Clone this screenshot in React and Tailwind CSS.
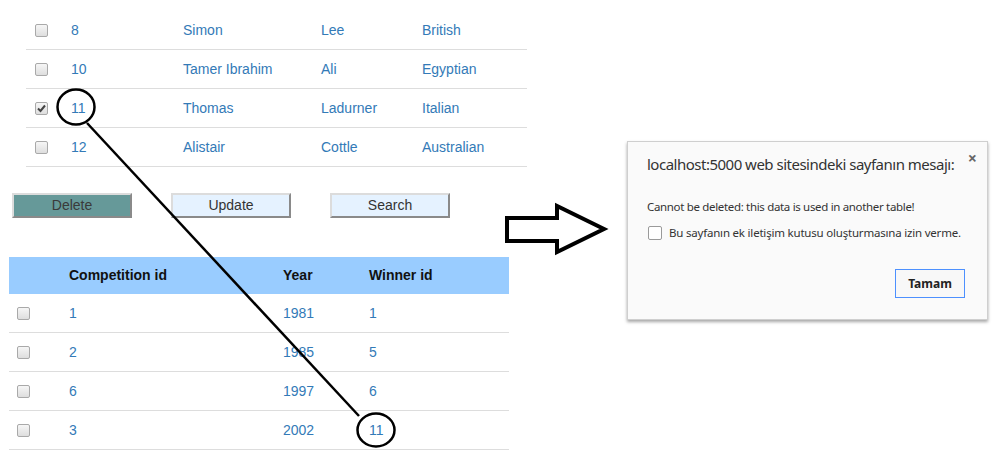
import React from 'react';

const people = [
  { id: 8, first: 'Simon', last: 'Lee', nat: 'British' },
  { id: 10, first: 'Tamer Ibrahim', last: 'Ali', nat: 'Egyptian' },
  { id: 11, first: 'Thomas', last: 'Ladurner', nat: 'Italian', checked: true },
  { id: 12, first: 'Alistair', last: 'Cottle', nat: 'Australian' },
];

const competitions = [
  { id: 1, year: 1981, winner: 1 },
  { id: 2, year: 1985, winner: 5 },
  { id: 6, year: 1997, winner: 6 },
  { id: 3, year: 2002, winner: 11 },
];

// old chrome style checkbox
const Check = ({ checked }) => (
  <span className="flex h-[13px] w-[13px] items-center justify-center rounded-[2px] border border-[#a9a9a9] bg-linear-to-b from-[#f6f6f6] to-[#dedede]">
    {checked && (
      <svg width="9" height="9" viewBox="0 0 9 9">
        <path d="M1 4.5 L3.5 7 L8 1.5" fill="none" stroke="#444" strokeWidth="2" />
      </svg>
    )}
  </span>
);

const OldButton = ({ children, dark }) => (
  <button
    className={`h-[25px] w-[120px] border-2 border-t-[#dcdcdc] border-l-[#dcdcdc] border-r-[#8a8a8a] border-b-[#8a8a8a] text-[14px] ${dark ? 'bg-[#669999] text-[#3a3a3a]' : 'bg-[#e5f2ff] text-[#333]'}`}
  >
    {children}
  </button>
);

// circles, line and arrow drawn over the screenshot
const Annotations = () => (
  <svg className="pointer-events-none absolute inset-0" width="996" height="457">
    <ellipse cx="76" cy="107" rx="18.5" ry="17.5" fill="none" stroke="#000" strokeWidth="2.5" />
    <line x1="87" y1="123" x2="359" y2="416" stroke="#000" strokeWidth="2.5" />
    <ellipse cx="376" cy="430" rx="18.5" ry="16.5" fill="none" stroke="#000" strokeWidth="2.5" />
    <polygon
      points="507,218 557,218 557,206 604,229 557,252 557,241 507,241"
      fill="#fff"
      stroke="#000"
      strokeWidth="4"
      strokeLinejoin="miter"
    />
  </svg>
);

export default function App() {
  return (
    <div className="relative flex h-[457px] w-[996px] overflow-hidden bg-white font-['Liberation_Sans',Arial,sans-serif] text-[14px]">
      <div className="w-[527px] shrink-0 pt-[11px]">
        {/* drivers table */}
        <div className="ml-[26px] w-[501px]">
          {people.map(p => (
            <div key={p.id} className="grid h-[39px] grid-cols-[37px_112px_138px_101px_113px] items-center border-b border-[#dddddd] text-[#337ab7]">
              <div className="pl-[9px]"><Check checked={p.checked} /></div>
              <div className="pl-[8px]">{p.id}</div>
              <div className="pl-[8px]">{p.first}</div>
              <div className="pl-[8px]">{p.last}</div>
              <div className="pl-[8px]">{p.nat}</div>
            </div>
          ))}
        </div>

        <div className="ml-[12px] mt-[26px] flex gap-[39px]">
          <OldButton dark>Delete</OldButton>
          <OldButton>Update</OldButton>
          <OldButton>Search</OldButton>
        </div>

        {/* competitions table */}
        <div className="ml-[9px] mt-[39px] w-[500px]">
          <div className="grid h-[37px] grid-cols-[52px_214px_86px_148px] items-center bg-[#99ccff] font-bold text-[#111]">
            <div />
            <div className="pl-[8px]">Competition id</div>
            <div className="pl-[8px]">Year</div>
            <div className="pl-[8px]">Winner id</div>
          </div>
          {competitions.map(c => (
            <div key={c.id} className="grid h-[39px] grid-cols-[52px_214px_86px_148px] items-center border-b border-[#dddddd] text-[#337ab7]">
              <div className="pl-[8px]"><Check /></div>
              <div className="pl-[8px]">{c.id}</div>
              <div className="pl-[8px]">{c.year}</div>
              <div className="pl-[8px]">{c.winner}</div>
            </div>
          ))}
        </div>
      </div>

      {/* browser alert */}
      <div className="ml-[100px] mt-[141px] h-[179px] w-[361px] shrink-0 self-start border border-[#cfcfcf] bg-[#fafafa] font-['Noto_Sans',sans-serif] text-[#333] shadow-[0_2px_3px_rgba(0,0,0,0.35)]">
        <div className="relative pl-[19px] pt-[12px]">
          <div className="text-[15px] leading-[20px] tracking-[-0.5px]">localhost:5000 web sitesindeki sayfanın mesajı:</div>
          <span className="absolute right-[10px] top-[4px] text-[16px] font-bold text-[#666]">×</span>
        </div>
        <div className="mt-[25px] pl-[19px] text-[11.5px] leading-[16px] tracking-[-0.33px]">Cannot be deleted: this data is used in another table!</div>
        <div className="mt-[10px] flex items-center gap-[7px] pl-[20px] text-[11.5px] leading-[16px] tracking-[-0.2px]">
          <span className="h-[14px] w-[14px] rounded-[2px] border border-[#9a9a9a] bg-white" />
          <span>Bu sayfanın ek iletişim kutusu oluşturmasına izin verme.</span>
        </div>
        <div className="mt-[28px] flex justify-end pr-[22px]">
          <button className="h-[29px] w-[70px] border border-[#4d90fe] bg-[#f8f8f8] text-[12px] font-bold text-[#222]">Tamam</button>
        </div>
      </div>

      <Annotations />
    </div>
  );
}
